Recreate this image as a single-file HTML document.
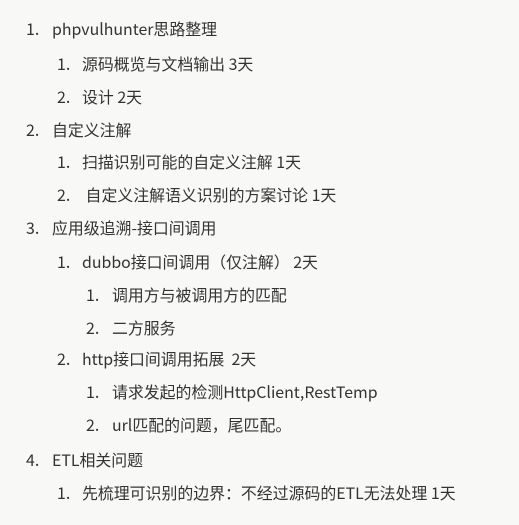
<!DOCTYPE html><html><head><meta charset="utf-8"><style>
body{margin:0;width:519px;height:525px;background:#f8f8f6;font-family:"Noto Sans CJK SC","Liberation Sans",sans-serif;font-size:15.9px;color:#333;position:relative;overflow:hidden}
.l,.n{position:absolute;height:20px;line-height:20px;white-space:pre;margin-top:2px}
</style></head><body>
<div class="n" style="left:26px;top:17px">1.</div><div class="l" style="left:52px;top:17px">phpvulhunter思路整理</div>
<div class="n" style="left:57px;top:52px">1.</div><div class="l" style="left:82px;top:52px">源码概览与文档输出 3天</div>
<div class="n" style="left:57px;top:85px">2.</div><div class="l" style="left:82px;top:85px">设计 2天</div>
<div class="n" style="left:26px;top:118px">2.</div><div class="l" style="left:52px;top:118px">自定义注解</div>
<div class="n" style="left:57px;top:150px">1.</div><div class="l" style="left:82px;top:150px">扫描识别可能的自定义注解 1天</div>
<div class="n" style="left:57px;top:183px">2.</div><div class="l" style="left:82px;top:183px"> 自定义注解语义识别的方案讨论 1天</div>
<div class="n" style="left:26px;top:216px">3.</div><div class="l" style="left:52px;top:216px">应用级追溯-接口间调用</div>
<div class="n" style="left:57px;top:250px">1.</div><div class="l" style="left:82px;top:250px">dubbo接口间调用（仅注解） 2天</div>
<div class="n" style="left:86px;top:283px">1.</div><div class="l" style="left:112px;top:283px">调用方与被调用方的匹配</div>
<div class="n" style="left:86px;top:316px">2.</div><div class="l" style="left:112px;top:316px">二方服务</div>
<div class="n" style="left:57px;top:347px">2.</div><div class="l" style="left:82px;top:347px">http接口间调用拓展  2天</div>
<div class="n" style="left:86px;top:380px">1.</div><div class="l" style="left:112px;top:380px">请求发起的检测HttpClient,RestTemp</div>
<div class="n" style="left:86px;top:413px">2.</div><div class="l" style="left:112px;top:413px">url匹配的问题，尾匹配。</div>
<div class="n" style="left:26px;top:448px">4.</div><div class="l" style="left:52px;top:448px">ETL相关问题</div>
<div class="n" style="left:57px;top:481px">1.</div><div class="l" style="left:82px;top:481px">先梳理可识别的边界：不经过源码的ETL无法处理 1天</div>
</body></html>
